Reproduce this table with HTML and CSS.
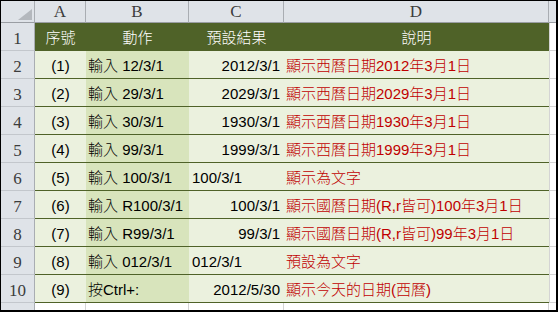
FILE: index.html
```html
<!DOCTYPE html>
<html lang="zh-Hant">
<head>
<meta charset="utf-8">
<link rel="stylesheet" href="styles.css">
</head>
<body>
<div class="sheet">
  <div class="ch corner"><svg class="tri" width="15" height="11" viewBox="0 0 15 11"><polygon points="14,0 14,11 0,11" fill="#b4b8bd"/></svg></div>
  <div class="ch">A</div>
  <div class="ch">B</div>
  <div class="ch">C</div>
  <div class="ch">D</div>
  <div class="ch ch-e"></div>

  <div class="rh">1</div>
  <div class="c hd">序號</div>
  <div class="c hd">動作</div>
  <div class="c hd">預設結果</div>
  <div class="c hd">說明</div>
  <div class="e"></div>

  <div class="rh">2</div>
  <div class="c a">(1)</div>
  <div class="c b">輸入 12/3/1</div>
  <div class="c cr">2012/3/1</div>
  <div class="c d">顯示西曆日期2012年3月1日</div>
  <div class="e"></div>

  <div class="rh">3</div>
  <div class="c a">(2)</div>
  <div class="c b">輸入 29/3/1</div>
  <div class="c cr">2029/3/1</div>
  <div class="c d">顯示西曆日期2029年3月1日</div>
  <div class="e"></div>

  <div class="rh">4</div>
  <div class="c a">(3)</div>
  <div class="c b">輸入 30/3/1</div>
  <div class="c cr">1930/3/1</div>
  <div class="c d">顯示西曆日期1930年3月1日</div>
  <div class="e"></div>

  <div class="rh">5</div>
  <div class="c a">(4)</div>
  <div class="c b">輸入 99/3/1</div>
  <div class="c cr">1999/3/1</div>
  <div class="c d">顯示西曆日期1999年3月1日</div>
  <div class="e"></div>

  <div class="rh">6</div>
  <div class="c a">(5)</div>
  <div class="c b">輸入 100/3/1</div>
  <div class="c cl">100/3/1</div>
  <div class="c d">顯示為文字</div>
  <div class="e"></div>

  <div class="rh">7</div>
  <div class="c a">(6)</div>
  <div class="c b">輸入 R100/3/1</div>
  <div class="c cr">100/3/1</div>
  <div class="c d">顯示國曆日期(R,r皆可)100年3月1日</div>
  <div class="e"></div>

  <div class="rh">8</div>
  <div class="c a">(7)</div>
  <div class="c b">輸入 R99/3/1</div>
  <div class="c cr">99/3/1</div>
  <div class="c d">顯示國曆日期(R,r皆可)99年3月1日</div>
  <div class="e"></div>

  <div class="rh">9</div>
  <div class="c a">(8)</div>
  <div class="c b">輸入 012/3/1</div>
  <div class="c cl">012/3/1</div>
  <div class="c d">預設為文字</div>
  <div class="e"></div>

  <div class="rh">10</div>
  <div class="c a">(9)</div>
  <div class="c b">按Ctrl+:</div>
  <div class="c cr">2012/5/30</div>
  <div class="c d">顯示今天的日期(西曆)</div>
  <div class="e"></div>

  <div class="rh rh-last"></div>
  <div class="w"></div>
  <div class="w"></div>
  <div class="w"></div>
  <div class="w"></div>
  <div class="w w-e"></div>
</div>
</body>
</html>
```

FILE: styles.css
```css
* { box-sizing: border-box; }
html, body { margin: 0; padding: 0; background: #fff; }
.sheet {
  width: 558px;
  height: 312px;
  border-top: 1px solid #000;
  border-left: 1px solid #000;
  border-right: 2px solid #000;
  border-bottom: 2px solid #000;
  display: grid;
  grid-template-columns: 34px 51px 103px 95px 265px 7px;
  grid-template-rows: 22px repeat(10, 28px) 7px;
  overflow: hidden;
  font-family: "Liberation Sans", "Noto Sans CJK TC", sans-serif;
  font-size: 15px;
  color: #000;
}
.ch {
  background: #dfe3e8;
  border-right: 1px solid #a9adb2;
  border-bottom: 1px solid #9a9ea3;
  font-family: "Liberation Serif", serif;
  font-size: 17px;
  color: #3c3c3c;
  display: flex;
  align-items: flex-end;
  justify-content: center;
  line-height: 18px;
  padding-bottom: 1px;
}
.corner { justify-content: flex-end; padding: 0 1px 2px 0; }
.tri { display: block; }
.ch-e { border-right: none; }
.rh {
  background: #dfe3e8;
  border-right: 1px solid #a9adb2;
  border-bottom: 1px solid #c3c7cc;
  font-family: "Liberation Serif", serif;
  font-size: 17px;
  color: #3c3c3c;
  display: flex;
  align-items: flex-end;
  justify-content: center;
  line-height: 18px;
  padding-bottom: 2px;
}
.rh-last { border-bottom: none; }
.c {
  background: #ebf1de;
  border-bottom: 1px solid #4f6228;
  display: flex;
  align-items: flex-end;
  line-height: 18px;
  padding-bottom: 3px;
  white-space: nowrap;
  overflow: hidden;
  font-weight: 300;
}
.hd {
  background: #4f6228;
  color: #fff;
  justify-content: center;
  font-family: "Noto Sans CJK TC", sans-serif;
  padding-bottom: 4px;
}
.a { justify-content: center; }
.b { background: #d8e4bc; padding-left: 2px; }
.cr { justify-content: flex-end; padding-right: 4px; }
.cl { padding-left: 3px; }
.d { color: #c00000; padding-left: 2px; }
.e { background: #fff; border-bottom: 1px solid #d4d4d4; border-left: 1px solid #d4d4d4; }
.w { background: #fff; border-right: 1px solid #d4d4d4; }
.w-e { border-right: none; }
```
